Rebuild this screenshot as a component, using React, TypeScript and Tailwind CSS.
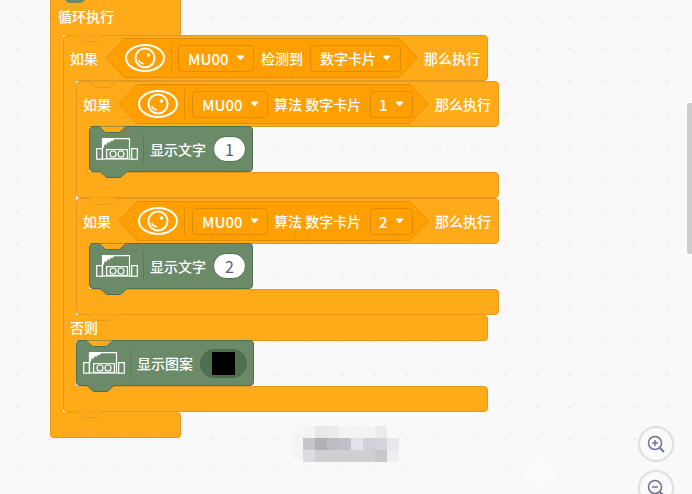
import React from "react";

const font = { fontFamily: '"Noto Sans CJK SC", "Liberation Sans", sans-serif' };

function Notch({ x, y, fill, stroke }: { x: number; y: number; fill: string; stroke: string }) {
  return (
    <svg width="30" height="8" viewBox="0 0 30 8" className="absolute z-10" style={{ left: x, top: y }}>
      <path d="M0 0.5 L1 0.5 L7.5 6.5 L21.5 6.5 L28 0.5 L30 0.5" fill={fill} stroke={stroke} strokeWidth="1" />
    </svg>
  );
}

function Caret() {
  return (
    <svg width="9" height="6" viewBox="0 0 9 6" className="shrink-0">
      <path d="M1 1 H8 L4.5 5 Z" fill="#fff" stroke="#fff" strokeWidth="1" strokeLinejoin="round" />
    </svg>
  );
}

function Eye() {
  return (
    <svg width="40" height="28" viewBox="0 0 40 28" className="shrink-0" fill="none" stroke="#fff" strokeWidth="2">
      <ellipse cx="20" cy="14" rx="19" ry="13" />
      <circle cx="20" cy="14" r="9.5" />
      <circle cx="23.5" cy="11" r="1.8" fill="#fff" stroke="none" />
      <path d="M13.5 16 C14.5 18.5 16.5 19.5 19 20" strokeWidth="1.6" />
    </svg>
  );
}

function Robot() {
  return (
    <svg width="42" height="24" viewBox="0 0 42 24" className="shrink-0" fill="none" stroke="#fff" strokeWidth="1.2">
      <path d="M6.5 21 V1.6 H33.5 V21" />
      <path d="M7 1.6 H19 L16 4.5 L15 3.5 L13 6.5 L12 4.5 L10 8.5 L9 6.5 L7.5 11 L7 11 Z" fill="#fff" stroke="none" />
      <rect x="0.7" y="11.6" width="5.6" height="10.6" />
      <rect x="35.7" y="11.6" width="5.6" height="10.6" />
      <rect x="10.6" y="12.6" width="20.8" height="8.8" />
      <circle cx="17" cy="17" r="3" />
      <circle cx="25" cy="17" r="3" />
      <path d="M6 22 H36" />
    </svg>
  );
}

function Dropdown({ children, className }: { children: React.ReactNode; className: string }) {
  return (
    <div className={`relative z-[1] flex h-[27px] shrink-0 items-center rounded-[4px] border border-[#dd8c08] bg-[#ff9f00] text-white ${className}`}>
      {children}
    </div>
  );
}

function Hexagon({ children }: { children: React.ReactNode }) {
  return (
    <div className="flex h-[40px] shrink-0 items-stretch">
      <svg width="20" height="40" viewBox="0 0 20 40" className="block shrink-0">
        <path d="M20 0.5 L19.5 0.5 L0.7 20 L19.5 39.5 L20 39.5 Z" fill="#ff9f00" />
        <path d="M20 0.5 L19.5 0.5 L0.7 20 L19.5 39.5 L20 39.5" fill="none" stroke="#e08e0b" />
      </svg>
      <div className="flex items-center border-y border-[#e08e0b] bg-[#ff9f00]">{children}</div>
      <svg width="20" height="40" viewBox="0 0 20 40" className="block shrink-0">
        <path d="M0 0.5 L0.5 0.5 L19.3 20 L0.5 39.5 L0 39.5 Z" fill="#ff9f00" />
        <path d="M0 0.5 L0.5 0.5 L19.3 20 L0.5 39.5 L0 39.5" fill="none" stroke="#e08e0b" />
      </svg>
    </div>
  );
}

function MuDropdown({ className }: { className: string }) {
  return (
    <Dropdown className={`w-[76px] pl-[9px] ${className}`}>
      <span className="text-[15px] font-medium leading-none">MU00</span>
      <span className="ml-[7px] flex"><Caret /></span>
    </Dropdown>
  );
}

function Sep() {
  return <div className="ml-[6px] h-[30px] w-px shrink-0 bg-[#e08e0b]" />;
}

function Arm() {
  return <div className="relative z-[1] -my-px w-[13px] shrink-0 border-l border-[#e3981f] bg-[#ffab19]" />;
}

function IfOuterHeader() {
  return (
    <div className="relative flex h-[46px] w-[425px] shrink-0 items-center rounded-t-[4px] rounded-br-[4px] border border-[#e3981f] bg-[#ffab19] pl-[6px] text-[14px] font-medium text-white">
      <Notch x={11} y={-1} fill="#ffab19" stroke="#e3981f" />
      <span className="w-[35px] shrink-0">如果</span>
      <Hexagon>
        <Eye />
        <Sep />
        <MuDropdown className="ml-[6px]" />
        <span className="ml-[7px] w-[49px] shrink-0">检测到</span>
        <Dropdown className="-mr-[3px] w-[91px] pl-[9px]">
          <span className="text-[14px]">数字卡片</span>
          <span className="ml-[6px] flex"><Caret /></span>
        </Dropdown>
      </Hexagon>
      <span className="ml-[6px] shrink-0">那么执行</span>
    </div>
  );
}

function IfInnerHeader({ n }: { n: string }) {
  return (
    <div className="relative flex h-[46px] w-[423px] shrink-0 items-center rounded-t-[4px] rounded-br-[4px] border border-[#e3981f] bg-[#ffab19] pl-[6px] text-[14px] font-medium text-white">
      <Notch x={11} y={-1} fill="#ffab19" stroke="#e3981f" />
      <span className="w-[35px] shrink-0">如果</span>
      <Hexagon>
        <Eye />
        <Sep />
        <MuDropdown className="ml-[7px]" />
        <span className="ml-[6px] w-[96px] shrink-0 whitespace-nowrap">算法 数字卡片</span>
        <Dropdown className="-mr-[4px] w-[43px] pl-[8px]">
          <span className="text-[15px] font-medium leading-none">{n}</span>
          <span className="ml-[7px] flex"><Caret /></span>
        </Dropdown>
      </Hexagon>
      <span className="ml-[6px] shrink-0">那么执行</span>
    </div>
  );
}

function GreenBlock({ width, children }: { width: string; children: React.ReactNode }) {
  return (
    <div className={`relative z-[2] -mt-px flex h-[46px] shrink-0 items-center rounded-[4px] border border-[#4f7050] bg-[#6a8a68] pl-[6px] text-[14px] font-medium text-white ${width}`}>
      <Notch x={8} y={-1} fill="#ffab19" stroke="#4f7050" />
      <Robot />
      <div className="ml-[5px] h-[30px] w-px shrink-0 bg-[#5a7a5a]" />
      <div className="flex flex-1 items-center pl-[6px]">{children}</div>
      <svg width="30" height="8" viewBox="0 0 30 8" className="absolute left-[9px] top-[44px] z-10">
        <path d="M0 0 L1 0.5 L7.5 6.5 L21.5 6.5 L28 0.5 L29 0" fill="#6a8a68" stroke="#4f7050" />
      </svg>
    </div>
  );
}

function TextPill({ v }: { v: string }) {
  return (
    <span className="ml-[7px] flex h-[26px] w-[33px] items-center justify-center rounded-full border border-[#4f7050] bg-white text-[16px] font-normal text-[#575e75]">
      {v}
    </span>
  );
}

function InnerIf({ n }: { n: string }) {
  return (
    <div className="flex shrink-0 flex-col">
      <IfInnerHeader n={n} />
      <div className="flex">
        <Arm />
        <GreenBlock width="w-[164px]">
          <span className="whitespace-nowrap">显示文字</span>
          <TextPill v={n} />
        </GreenBlock>
      </div>
      <div className="relative h-[26px] w-[423px] shrink-0 rounded-b-[4px] rounded-tr-[4px] border border-[#e3981f] bg-[#ffab19]">
        <Notch x={11} y={24} fill="#ffab19" stroke="#e3981f" />
      </div>
    </div>
  );
}

const mosaic = [
  ["#f4f4f4", "#e9e9e9", "#ececec", "#f4f4f4", "#f3f3f3", "#f4f4f4", "#ececec", "#f9f9f9"],
  ["#c6c6cc", "#b0b0b6", "#bcbcc4", "#c0c0c8", "#e2e2ea", "#d0d0d8", "#d4d4dc", "#e8e8e8"],
  ["#dcdce0", "#d0d0d2", "#d0d0d2", "#d0d0d2", "#d0d0d2", "#d0d0d2", "#c8c8cc", "#eeeeee"],
];

export default function App() {
  return (
    <div
      className="relative h-[494px] w-[692px] overflow-hidden bg-[#f9f9f9] bg-[radial-gradient(circle,#ebebeb_1px,transparent_1.4px)] bg-[length:32.5px_32.5px] bg-[position:1px_0.5px]"
      style={font}
    >
      {/* block stack: a free canvas */}
      <div className="absolute left-[50px] top-[-11px] flex flex-col">
        <div className="relative flex h-[46px] w-[131px] items-end rounded-tr-[4px] border-x border-[#e3981f] bg-[#ffab19] pb-[8px] pl-[7px] text-[14px] font-medium text-white">
          循环执行
          <div className="absolute left-[14px] top-[4px] h-[10px] w-[20px] rounded-b-[5px] bg-[#6a8a68]" />
        </div>
        <div className="flex">
          <Arm />
          <div className="flex flex-col">
            <IfOuterHeader />
            <div className="flex">
              <Arm />
              <div className="flex flex-col">
                <InnerIf n="1" />
                <InnerIf n="2" />
              </div>
            </div>
            <div className="h-[26px] w-[425px] rounded-r-[4px] border-x border-b border-[#e3981f] bg-[#ffab19] pl-[6px] text-[14px] font-medium leading-[24px] text-white">
              否则
            </div>
            <div className="flex">
              <Arm />
              <GreenBlock width="w-[178px]">
                <span className="whitespace-nowrap">显示图案</span>
                <span className="ml-[7px] flex h-[29px] w-[47px] items-center justify-center rounded-full border border-[#4a6a4a] bg-[#4f7050]">
                  <span className="h-[23px] w-[23px] bg-black" />
                </span>
              </GreenBlock>
            </div>
            <div className="relative h-[26px] w-[425px] rounded-b-[4px] rounded-tr-[4px] border border-[#e3981f] bg-[#ffab19]">
              <Notch x={11} y={24} fill="#ffab19" stroke="#e3981f" />
            </div>
          </div>
        </div>
        <div className="h-[26px] w-[131px] rounded-b-[4px] rounded-tr-[4px] border-x border-b border-[#e3981f] bg-[#ffab19]" />
      </div>

      {/* blurred label */}
      <div className="absolute left-[291px] top-[431px] h-[29px] w-[14px] rounded-l-[10px] bg-[#f4f4f4] blur-[1px]" />
      <div className="absolute left-[303px] top-[426px] grid grid-cols-[repeat(8,12px)] grid-rows-[repeat(3,12px)] blur-[0.6px]">
        {mosaic.flat().map((c, i) => (
          <div key={i} style={{ background: c }} />
        ))}
      </div>

      {/* watermark */}
      <svg width="36" height="44" viewBox="0 0 36 44" className="absolute left-[522px] top-[450px]" fill="#fbfbfb">
        <path d="M18 0 L22 10 L36 14 L30 32 L18 42 L6 32 L0 14 L14 10 Z" />
      </svg>
      <div className="absolute left-[570px] top-[450px] whitespace-nowrap text-[22px] leading-[27px] text-[#fbfbfb]">DF创客社区</div>
      <div className="absolute left-[570px] top-[480px] whitespace-nowrap text-[11px] leading-[12px] text-[#fbfbfb]">www.DFRobot.com.cn</div>

      {/* scrollbar */}
      <div className="absolute left-[687px] top-[103px] h-[151px] w-[5px] rounded-l-[3px] bg-[#cccccc]" />

      {/* zoom controls */}
      <button className="absolute left-[638px] top-[426px] flex h-[36px] w-[36px] items-center justify-center rounded-full border-2 border-[#e0e0e0] bg-[#fafafa]">
        <svg width="20" height="20" viewBox="0 0 20 20" fill="none" stroke="#6f7390" strokeWidth="1.5">
          <circle cx="9" cy="9" r="6.5" />
          <path d="M9 6 V12 M6 9 H12" />
          <path d="M14 14 L18 18" strokeWidth="2" />
        </svg>
      </button>
      <button className="absolute left-[638px] top-[470px] flex h-[36px] w-[36px] items-center justify-center rounded-full border-2 border-[#e0e0e0] bg-[#fafafa]">
        <svg width="20" height="20" viewBox="0 0 20 20" fill="none" stroke="#6f7390" strokeWidth="1.5">
          <circle cx="9" cy="9" r="6.5" />
          <path d="M6 9 H12" />
          <path d="M14 14 L18 18" strokeWidth="2" />
        </svg>
      </button>
    </div>
  );
}
